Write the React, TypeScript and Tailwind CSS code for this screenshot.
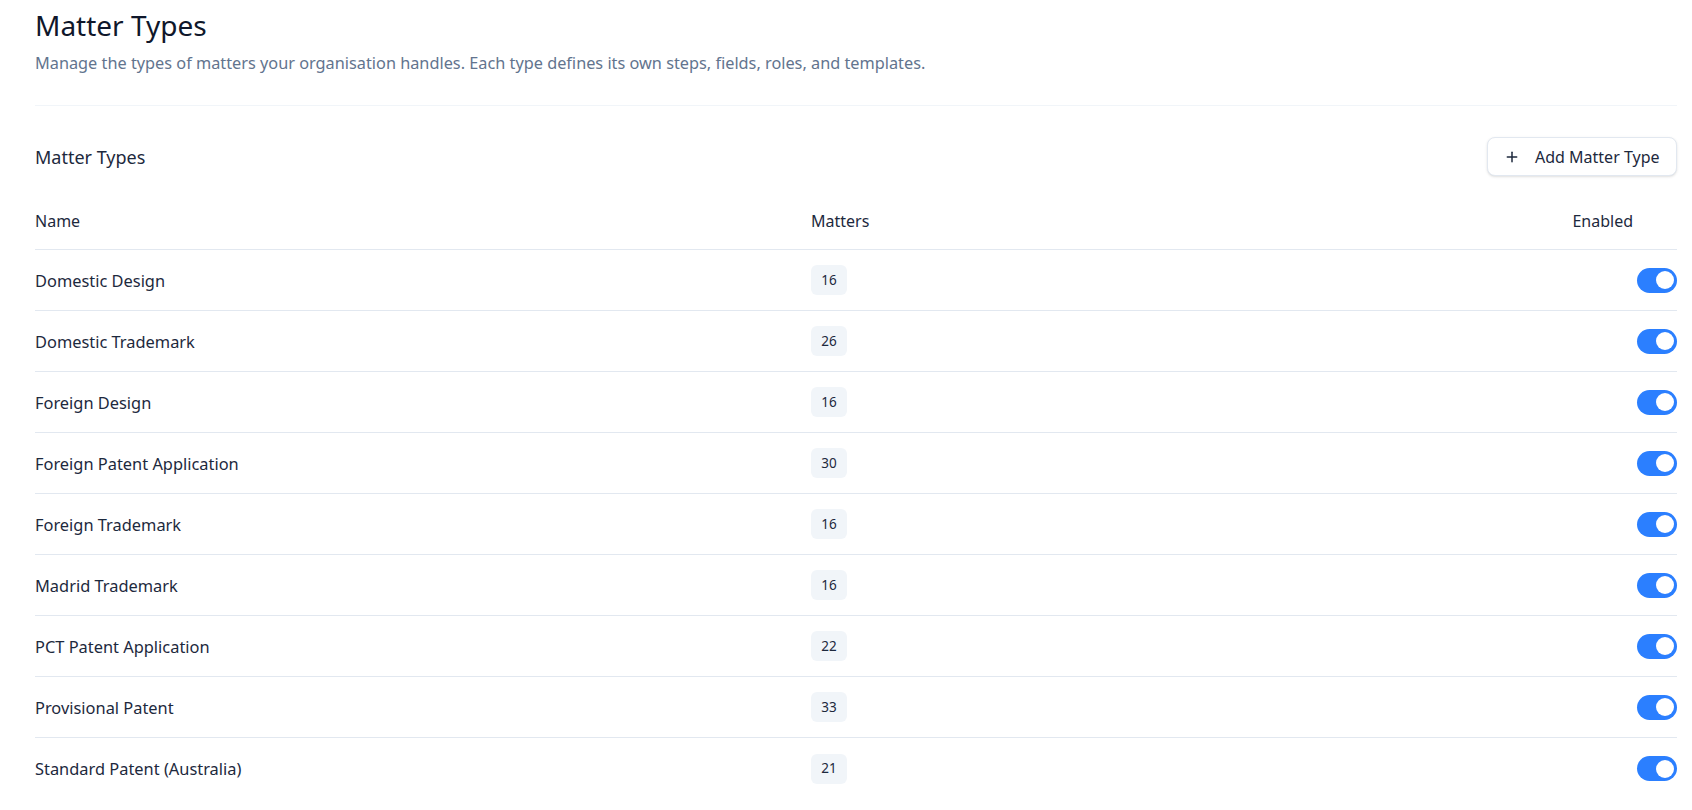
import React, { useState } from "react";
import { Plus } from "lucide-react";

type MatterType = {
  name: string;
  matters: number;
  enabled: boolean;
};

const initialTypes: MatterType[] = [
  { name: "Domestic Design", matters: 16, enabled: true },
  { name: "Domestic Trademark", matters: 26, enabled: true },
  { name: "Foreign Design", matters: 16, enabled: true },
  { name: "Foreign Patent Application", matters: 30, enabled: true },
  { name: "Foreign Trademark", matters: 16, enabled: true },
  { name: "Madrid Trademark", matters: 16, enabled: true },
  { name: "PCT Patent Application", matters: 22, enabled: true },
  { name: "Provisional Patent", matters: 33, enabled: true },
  { name: "Standard Patent (Australia)", matters: 21, enabled: true },
];

const Toggle = ({ on, onChange }: { on: boolean; onChange: () => void }) => (
  <button
    role="switch"
    aria-checked={on}
    onClick={onChange}
    className={`relative flex h-[25px] w-10 items-center rounded-full px-[3px] transition-colors ${
      on ? "justify-end bg-blue-500" : "justify-start bg-slate-300"
    }`}
  >
    <span className="block size-[18px] rounded-full bg-white" />
  </button>
);

export default function App() {
  const [types, setTypes] = useState(initialTypes);

  const toggle = (i: number) =>
    setTypes((prev) => prev.map((t, idx) => (idx === i ? { ...t, enabled: !t.enabled } : t)));

  return (
    <div
      className="min-h-screen bg-white pl-[35px] pr-[15px] pt-[7px] text-slate-800"
      style={{ fontFamily: '"Noto Sans", "Open Sans", sans-serif' }}
    >
      {/* page header */}
      <div className="border-b border-slate-100 pb-[30px]">
        <h1 className="text-[28px] leading-9 text-slate-900">Matter Types</h1>
        <p className="mt-2 text-[16.3px] leading-6 text-slate-500">
          Manage the types of matters your organisation handles. Each type defines its own steps, fields, roles, and
          templates.
        </p>
      </div>

      {/* section header */}
      <div className="flex items-center justify-between pt-[31px]">
        <h2 className="text-lg">Matter Types</h2>
        <button className="flex h-[39px] w-[190px] items-center gap-[15px] rounded-lg border border-slate-200 bg-white pl-[16px] text-base shadow-sm">
          <Plus className="size-4" strokeWidth={2.25} />
          Add Matter Type
        </button>
      </div>

      {/* table */}
      <div className="mt-[17px]">
        <div className="grid h-[57px] grid-cols-[776px_1fr_auto] items-center border-b border-slate-200 text-base">
          <span>Name</span>
          <span>Matters</span>
          <span className="pr-[44px]">Enabled</span>
        </div>
        {types.map((t, i) => (
          <div
            key={t.name}
            className={`grid h-[61px] grid-cols-[776px_1fr_auto] items-center text-[16.4px] ${
              i < types.length - 1 ? "border-b border-slate-200" : ""
            }`}
          >
            <span className="pt-[2px]">{t.name}</span>
            <span>
              <span className="inline-flex h-[30px] w-9 items-center justify-center rounded-md bg-slate-100 text-[13.5px]">
                {t.matters}
              </span>
            </span>
            <Toggle on={t.enabled} onChange={() => toggle(i)} />
          </div>
        ))}
      </div>
    </div>
  );
}
